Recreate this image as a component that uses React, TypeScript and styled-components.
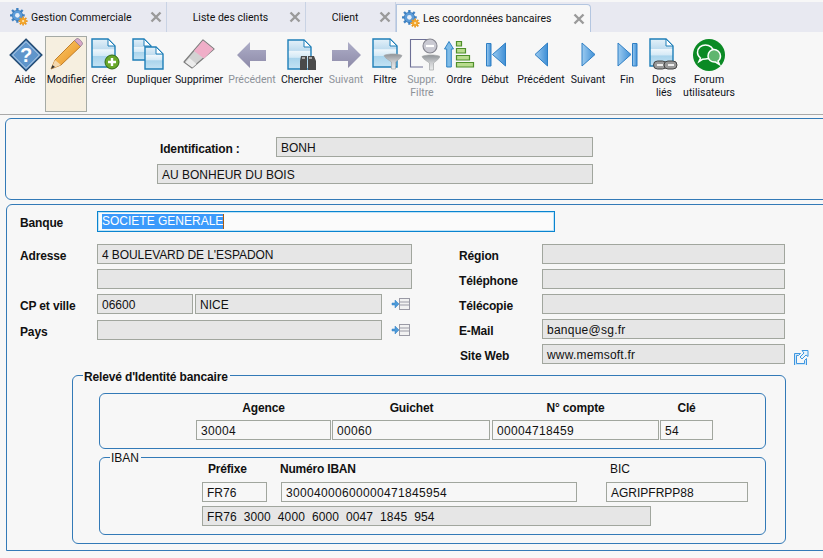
import React from "react";
import styled, { createGlobalStyle } from "styled-components";

const Global = createGlobalStyle`
  html, body { margin: 0; padding: 0; background: #f7f7f7; }
  body { font-family: "Liberation Sans", Arial, sans-serif; }
`;

const Screen = styled.div`
  width: 823px;
  height: 558px;
  overflow: hidden;
  display: flex;
  flex-direction: column;
  background: #f7f7f7;
  color: #111;
`;

const TabBar = styled.div`
  height: 30px;
  margin-top: 2px;
  background: #e8e9f1;
  display: flex;
  flex: none;
`;

const Tab = styled.div<{ $w: number; $active?: boolean; $center?: boolean }>`
  width: ${(p) => p.$w}px;
  box-sizing: border-box;
  flex: none;
  display: flex;
  align-items: center;
  padding-left: ${(p) => (p.$center ? 8 : p.$active ? 5 : 10)}px;
  padding-right: ${(p) => (p.$active ? 5 : 4)}px;
  margin-top: ${(p) => (p.$active ? 2 : 0)}px;
  font: 10.5px Roboto, sans-serif;
  color: #111;
  gap: 3px;
  background: ${(p) => (p.$active ? "#f7f7f7" : "transparent")};
  border-right: 1px solid ${(p) => (p.$active ? "#b4c6e0" : "#c9d3e4")};
  border-top: ${(p) => (p.$active ? "1px solid #b4c6e0" : "0")};
  border-left: ${(p) => (p.$active ? "1px solid #b4c6e0" : "0")};
  border-top-right-radius: ${(p) => (p.$active ? 4 : 0)}px;
`;

const TabText = styled.span<{ $center?: boolean }>`
  flex: 1;
  white-space: nowrap;
  text-align: ${(p) => (p.$center ? "center" : "left")};
`;

const Toolbar = styled.div`
  height: 83px;
  flex: none;
  box-sizing: border-box;
  padding: 4px 0 0 5px;
  display: flex;
  border-bottom: 1px solid #a9a9a9;
  background: #f7f7f7;
`;

const ToolButton = styled.div<{ $w: number; $selected?: boolean }>`
  width: ${(p) => p.$w}px;
  height: 76px;
  box-sizing: border-box;
  flex: none;
  display: flex;
  flex-direction: column;
  align-items: center;
  background: ${(p) => (p.$selected ? "#f6efe0" : "transparent")};
  border: ${(p) => (p.$selected ? "1px solid #a5aaa5" : "1px solid transparent")};
`;

const ToolIcon = styled.svg`
  flex: none;
  width: 36px;
  height: 36px;
`;

const ToolLabel = styled.span<{ $off?: boolean }>`
  font: 10.5px/13px Roboto, sans-serif;
  white-space: pre;
  text-align: center;
  color: ${(p) => (p.$off ? "#8d9299" : "#10131c")};
`;

const Panel = styled.div`
  margin-left: 5px;
  margin-top: 3px;
  width: 830px;
  height: 82px;
  flex: none;
  box-sizing: border-box;
  border: 1px solid #337ab7;
  border-radius: 6px;
  padding: 18px 0 0 151px;
  display: flex;
  flex-direction: column;
  gap: 7px;
`;

const Row = styled.div<{ $h?: number }>`
  display: flex;
  align-items: center;
  height: ${(p) => p.$h ?? 20}px;
`;

const Label = styled.span<{ $w: number; $shift?: number }>`
  width: ${(p) => p.$w}px;
  padding: 3px 0 0 ${(p) => p.$shift ?? 0}px;
  box-sizing: border-box;
  flex: none;
  font: bold 12px/14px "Liberation Sans", Arial, sans-serif;
  letter-spacing: -0.15px;
  color: #111;
`;

const Field = styled.div<{ $w: number; $tone?: "gray" | "plain"; $track?: number }>`
  width: ${(p) => p.$w}px;
  height: 20px;
  flex: none;
  box-sizing: border-box;
  border: 1px solid #a1a69e;
  padding-left: 4px;
  background: ${(p) => (p.$tone === "plain" ? "#f7f7f7" : "#e6e6e6")};
  font: 12px/20px "Liberation Sans", Arial, sans-serif;
  letter-spacing: ${(p) => p.$track ?? 0}px;
  color: #111;
  white-space: pre;
  overflow: hidden;
`;

const ActiveField = styled.div`
  width: 458px;
  height: 21px;
  box-sizing: border-box;
  flex: none;
  border: 1px solid #0a84d0;
  box-shadow: inset 0 0 0 1px #bfe3f7;
  padding: 2px 0 0 4px;
  background: #fbfbfb;
  font: 12px/15px "Liberation Sans", Arial, sans-serif;
`;

const Selected = styled.span`
  display: inline-block;
  background: #3b9afb;
  color: #fff;
  border-right: 1px solid #a45a10;
`;

const MainPanel = styled.div`
  margin: 4px 0 0 6px;
  width: 830px;
  height: 347px;
  flex: none;
  box-sizing: border-box;
  border: 1px solid #337ab7;
  border-top-left-radius: 6px;
  padding: 6px 0 0 13px;
`;

const Columns = styled.div`
  display: flex;
  margin-top: 12px;
`;

const LeftColumn = styled.div`
  width: 439px;
  flex: none;
  display: flex;
  flex-direction: column;
`;

const RightColumn = styled.div`
  display: flex;
  flex-direction: column;
  gap: 5px;
`;

const LeftRow = styled(Row)<{ $gap: number }>`
  margin-bottom: ${(p) => p.$gap}px;
  gap: 2px;
`;

const LinkIcon = styled.svg`
  flex: none;
  margin-left: 7px;
  width: 20px;
  height: 14px;
`;

const OpenIcon = styled.svg`
  flex: none;
  margin-left: 8px;
  margin-top: 5px;
  width: 16px;
  height: 16px;
`;

const GroupBox = styled.div`
  position: relative;
  margin: 11px 0 0 52px;
  width: 714px;
  height: 169px;
  box-sizing: border-box;
  border: 1px solid #337ab7;
  border-radius: 6px;
  padding: 17px 0 0 26px;
  display: flex;
  flex-direction: column;
  gap: 8px;
`;

const Legend = styled.span<{ $bold?: boolean; $left: number }>`
  position: absolute;
  top: ${(p) => (p.$bold ? -6 : -7)}px;
  left: ${(p) => p.$left}px;
  padding: 0 2px 0 1px;
  background: #f7f7f7;
  font: ${(p) => (p.$bold ? "bold" : "normal")} 12px/14px "Liberation Sans", Arial, sans-serif;
  letter-spacing: ${(p) => (p.$bold ? -0.15 : 0)}px;
  color: #111;
`;

const SubBox = styled.div<{ $h: number }>`
  position: relative;
  width: 667px;
  height: ${(p) => p.$h}px;
  flex: none;
  box-sizing: border-box;
  border: 1px solid #337ab7;
  border-radius: 6px;
`;

const RibGrid = styled.div`
  display: flex;
  gap: 1px;
  padding: 7px 0 0 96px;
`;

const RibColumn = styled.div<{ $w: number }>`
  width: ${(p) => p.$w}px;
  display: flex;
  flex-direction: column;
  gap: 5px;
`;

const Heading = styled.span`
  font: bold 12px/14px "Liberation Sans", Arial, sans-serif;
  letter-spacing: -0.15px;
  text-align: center;
`;

const IbanBody = styled.div`
  padding: 4px 0 0 102px;
  display: flex;
  flex-direction: column;
  gap: 4px;
`;

const IbanCells = styled.div`
  display: grid;
  grid-template-columns: 79px 325px 142px;
  row-gap: 6px;
`;

const IbanHeading = styled.span<{ $shift: number; $bold?: boolean }>`
  margin-left: ${(p) => p.$shift}px;
  font: ${(p) => (p.$bold ? "bold" : "normal")} 12px/14px "Liberation Sans", Arial, sans-serif;
  letter-spacing: ${(p) => (p.$bold ? -0.2 : 0)}px;
`;

const Gear = () => (
  <svg width="18" height="18" viewBox="0 0 22 22" style={{ flex: "none" }}>
    <g stroke="#3f82c4" strokeWidth="2.8">
      <path d="M9 0v18M0 9h18M2.500 2.500l13 13M15.500 2.500l-13 13" />
    </g>
    <circle cx="9" cy="9" r="6.400" fill="#5b9bd8" stroke="#2e6fae" strokeWidth=".8" />
    <circle cx="9" cy="9" r="2.800" fill="#e6eef8" />
    <g stroke="#e7941f" strokeWidth="2">
      <path d="M16 10.500v11M10.500 16h11M12 12l8 8M20 12l-8 8" />
    </g>
    <circle cx="16" cy="16" r="3.800" fill="#f2a52c" />
    <circle cx="16" cy="16" r="1.400" fill="#fde7b5" />
  </svg>
);

const Close = () => (
  <svg width="12" height="12" viewBox="0 0 12 12" style={{ flex: "none" }}>
    <path d="M1.500 1.500l9 9M10.500 1.500l-9 9" stroke="#9a9a9a" strokeWidth="2.400" />
  </svg>
);

const Defs = () => (
  <svg width="0" height="0" style={{ position: "absolute" }}>
    <defs>
      <linearGradient id="page" x1="0" y1="0" x2="0" y2="1">
        <stop offset="0" stopColor="#e4f1f9" />
        <stop offset=".36" stopColor="#bfdcef" />
        <stop offset=".38" stopColor="#eef6fb" />
        <stop offset=".6" stopColor="#d3e9f6" />
        <stop offset=".62" stopColor="#a9d4ec" />
        <stop offset="1" stopColor="#c4e3f4" />
      </linearGradient>
      <linearGradient id="blueBtn" x1="0" y1="0" x2="1" y2="0">
        <stop offset="0" stopColor="#9ccbf0" />
        <stop offset="1" stopColor="#3f8fd6" />
      </linearGradient>
      <linearGradient id="greyArrow" x1="0" y1="0" x2="0" y2="1">
        <stop offset="0" stopColor="#aeaec8" />
        <stop offset="1" stopColor="#8d8aa8" />
      </linearGradient>
      <linearGradient id="pencil" x1="0" y1="0" x2="1" y2="1">
        <stop offset="0" stopColor="#fbd27a" />
        <stop offset="1" stopColor="#e98a14" />
      </linearGradient>
      <linearGradient id="funnel" x1="0" y1="0" x2="0" y2="1">
        <stop offset="0" stopColor="#8f9397" />
        <stop offset=".5" stopColor="#c9cbce" />
        <stop offset="1" stopColor="#eceded" />
      </linearGradient>
    </defs>
  </svg>
);

const Page = ({ x, y, w = 22, h = 28 }: { x: number; y: number; w?: number; h?: number }) => (
  <g>
    <path
      d={`M${x} ${y}h${w - 7}l7 7v${h - 7}h-${w}z`}
      fill="url(#page)"
      stroke="#1f7fb8"
      strokeWidth="1.400"
    />
    <path d={`M${x + w - 7} ${y}v7h7z`} fill="#fff" stroke="#1f7fb8" strokeWidth="1" />
  </g>
);

const Funnel = ({ x, y }: { x: number; y: number }) => (
  <path
    transform={`translate(${x} ${y})`}
    d="M0 1.500C4-.5 14-.5 18 1.500c-1 3-5 5-6.500 6.500v7h-4V8C6 6.500 1 4.500 0 1.500z"
    fill="url(#funnel)"
    stroke="#a4a6a8"
    strokeWidth=".7"
  />
);

const icons: Record<string, React.ReactNode> = {
  aide: (
    <>
      <path d="M19 2L35 18 19 34 3 18z" fill="#3e78b5" stroke="#24496f" strokeWidth="1.200" />
      <path d="M19 4.500L32.500 18 19 31.500 5.500 18z" fill="#5f95cb" stroke="#cfe0f0" strokeWidth="1" />
      <text x="19" y="25" textAnchor="middle" fontFamily="Liberation Sans" fontWeight="bold" fontSize="20" fill="#fff">?</text>
    </>
  ),
  modifier: (
    <>
      <path d="M3 32l4-9L27 3l6 6-20 19z" fill="url(#pencil)" stroke="#b26a10" strokeWidth=".8" />
      <path d="M26.500 3.500l6 6 2-2.500c.5-1.500-3.500-6-5.500-5.500z" fill="#d9a8c8" stroke="#8a7a90" strokeWidth=".8" />
      <path d="M7 23l6 5-10 4z" fill="#f4d8ae" />
      <path d="M3 32l1.500-4 2.500 2z" fill="#333" />
    </>
  ),
  creer: (
    <>
      <Page x={6} y={2} w={23} h={28} />
      <circle cx="26" cy="25" r="7" fill="#6aa82a" stroke="#2f6a12" strokeWidth="1" />
      <path d="M26 21v8M22 25h8" stroke="#fff" strokeWidth="2.400" />
    </>
  ),
  dupliquer: (
    <>
      <Page x={2} y={2} w={18} h={21} />
      <Page x={14} y={10} w={18} h={22} />
    </>
  ),
  supprimer: (
    <>
      <path d="M3 25L22 3l11 9L11 31z" fill="#d2d2d2" stroke="#7d7d7d" strokeWidth="1.200" strokeLinejoin="round" />
      <path d="M13 14L22 3.500 32.500 12 23 21.500z" fill="#f0aec8" />
      <path d="M4.500 25.500l4-4.500 7 6-4 3.500z" fill="#ececec" />
    </>
  ),
  arrowL: <path d="M3 18L16 5v8h16v11H16v7z" fill="url(#greyArrow)" />,
  chercher: (
    <>
      <Page x={4} y={3} w={23} h={29} />
      <path d="M17 19h6v14h-7v-9zM24 19h6l2 5v9h-8z" fill="#4a4a4a" />
      <path d="M18 21h3M25 21h3" stroke="#aaa" strokeWidth="2" />
    </>
  ),
  arrowR: <path d="M33 18L20 5v8H4v11h16v7z" fill="url(#greyArrow)" />,
  filtre: (
    <>
      <Page x={6} y={2} w={24} h={28} />
      <Funnel x={17} y={17} />
    </>
  ),
  supprFiltre: (
    <>
      <path d="M23 2.500H6.500v27.500H19" fill="#f8f8f8" stroke="#6d6f95" strokeWidth="1.100" />
      <circle cx="26" cy="9" r="7" fill="#c9c9d2" stroke="#85858f" strokeWidth="1.100" />
      <path d="M22 9h8" stroke="#fff" strokeWidth="2.200" />
      <Funnel x={18} y={18} />
    </>
  ),
  ordre: (
    <>
      <path d="M3.500 12L8 4.500l4.500 7.500h-2.200v18H5.700V12z" fill="#7fbce8" stroke="#2f83c4" strokeWidth="1" />
      <path d="M15.500 4.500h5v4.500h-5zM15.500 11.500h9V16h-9zM15.500 18.500h13V23h-13zM15.500 25.500h17V30h-17z" fill="#b9dc8e" stroke="#4f8f2a" strokeWidth="1.200" />
    </>
  ),
  debut: (
    <>
      <path d="M9.500 6.500h4.500v22.500H9.500z" fill="url(#blueBtn)" stroke="#2f7fc4" />
      <path d="M28.500 6v23L15.500 17.500z" fill="url(#blueBtn)" stroke="#2f7fc4" />
    </>
  ),
  prec: <path d="M24.500 6v23L12 17.500z" fill="url(#blueBtn)" stroke="#2f7fc4" />,
  suiv: <path d="M12 6v23l13-11.500z" fill="url(#blueBtn)" stroke="#2f7fc4" />,
  fin: (
    <>
      <path d="M9 6v23l13-11.500z" fill="url(#blueBtn)" stroke="#2f7fc4" />
      <path d="M23.500 6.500h4.500v22.500h-4.500z" fill="url(#blueBtn)" stroke="#2f7fc4" />
    </>
  ),
  docs: (
    <>
      <Page x={4} y={2} w={23} h={27} />
      <rect x="7.500" y="24" width="13" height="8" rx="4" fill="#999" stroke="#444" strokeWidth="1" />
      <rect x="18" y="24" width="13" height="8" rx="4" fill="#999" stroke="#444" strokeWidth="1" />
      <rect x="11" y="27" width="6" height="2" fill="#eee" />
      <rect x="22" y="27" width="6" height="2" fill="#eee" />
    </>
  ),
  forum: (
    <>
      <circle cx="18" cy="18" r="16" fill="#0b8a25" />
      <path d="M6.500 15.500C6.500 10.500 10.500 8 14.500 8s8 2.500 8 7-4 7-8 7c-1 0-2 0-3 .3L8 24.500l1.500-3.500C7.500 19.500 6.500 17.500 6.500 15.500z" fill="#0b8a25" stroke="#fff" strokeWidth="1.500" />
      <path d="M17 19c0-4 3-6.500 6-6.500s6.500 2.500 6.500 6.500c0 2-1 4-2.500 5l1.500 3.500-4-2.500c-4.500.5-7.500-2.500-7.500-6z" fill="#5fb66f" stroke="#fff" strokeWidth="1.500" />
    </>
  ),
};

const tools = [
  { w: 40, label: "Aide", icon: "aide" },
  { w: 42, label: "Modifier", icon: "modifier", selected: true },
  { w: 34, label: "Créer", icon: "creer" },
  { w: 56, label: "Dupliquer", icon: "dupliquer" },
  { w: 44, label: "Supprimer", icon: "supprimer" },
  { w: 62, label: "Précédent", icon: "arrowL", off: true },
  { w: 38, label: "Chercher", icon: "chercher" },
  { w: 50, label: "Suivant", icon: "arrowR", off: true },
  { w: 28, label: "Filtre", icon: "filtre" },
  { w: 46, label: "Suppr.\nFiltre", icon: "supprFiltre", off: true },
  { w: 28, label: "Ordre", icon: "ordre" },
  { w: 44, label: "Début", icon: "debut" },
  { w: 48, label: "Précédent", icon: "prec" },
  { w: 46, label: "Suivant", icon: "suiv" },
  { w: 32, label: "Fin", icon: "fin" },
  { w: 42, label: "Docs\nliés", icon: "docs" },
  { w: 48, label: "Forum\nutilisateurs", icon: "forum" },
];

const ListLink = () => (
  <LinkIcon viewBox="0 0 20 14">
    <path d="M1 6h3V3l4 4-4 4V8H1z" fill="#4d9ad8" stroke="#2f7fc4" strokeWidth=".5" />
    <rect x="8.500" y="1.500" width="10" height="11" fill="#f2f2f2" stroke="#9a9aa5" />
    <path d="M9 5h9M9 8h9" stroke="#9a9aa5" />
  </LinkIcon>
);

const ExternalLink = () => (
  <OpenIcon viewBox="0 0 16 16">
    <path d="M1.500 4.500h6l-2 2h-2v8h8v-3l2-2v7h-12z" fill="#cfe6f8" stroke="#3f97e0" />
    <path d="M9 1.500h6v6l-2-1.500-4 4-2-2 4-4z" fill="#e8f4fc" stroke="#3f97e0" />
  </OpenIcon>
);

export default function App() {
  return (
    <Screen>
      <Global />
      <Defs />
      <TabBar>
        <Tab $w={167}>
          <Gear />
          <TabText>Gestion Commerciale</TabText>
          <Close />
        </Tab>
        <Tab $w={139} $center>
          <TabText $center>Liste des clients</TabText>
          <Close />
        </Tab>
        <Tab $w={90} $center>
          <TabText $center>Client</TabText>
          <Close />
        </Tab>
        <Tab $w={195} $active>
          <Gear />
          <TabText>Les coordonnées bancaires</TabText>
          <Close />
        </Tab>
      </TabBar>

      <Toolbar>
        {tools.map((t) => (
          <ToolButton key={t.label + t.icon} $w={t.w} $selected={t.selected}>
            <ToolIcon viewBox="0 0 36 36">{icons[t.icon]}</ToolIcon>
            <ToolLabel $off={t.off}>{t.label}</ToolLabel>
          </ToolButton>
        ))}
      </Toolbar>

      <Panel>
        <Row>
          <Label $w={119} $shift={3}>Identification :</Label>
          <Field $w={317}>BONH</Field>
        </Row>
        <Row>
          <Field $w={436}>AU BONHEUR DU BOIS</Field>
        </Row>
      </Panel>

      <MainPanel>
        <Row $h={21}>
          <Label $w={77}>Banque</Label>
          <ActiveField>
            <Selected>SOCIETE GENERALE</Selected>
          </ActiveField>
        </Row>
        <Columns>
          <LeftColumn>
            <LeftRow $gap={5}>
              <Label $w={75}>Adresse</Label>
              <Field $w={315} $track={-0.08}>4 BOULEVARD DE L'ESPADON</Field>
            </LeftRow>
            <LeftRow $gap={5}>
              <Label $w={75} />
              <Field $w={315} />
            </LeftRow>
            <LeftRow $gap={6}>
              <Label $w={75}>CP et ville</Label>
              <Field $w={96}>06600</Field>
              <Field $w={187}>NICE</Field>
              <ListLink />
            </LeftRow>
            <LeftRow $gap={0}>
              <Label $w={75}>Pays</Label>
              <Field $w={285} />
              <ListLink />
            </LeftRow>
          </LeftColumn>
          <RightColumn>
            <Row>
              <Label $w={83}>Région</Label>
              <Field $w={243} />
            </Row>
            <Row>
              <Label $w={83}>Téléphone</Label>
              <Field $w={243} />
            </Row>
            <Row>
              <Label $w={83}>Télécopie</Label>
              <Field $w={243} />
            </Row>
            <Row>
              <Label $w={83}>E-Mail</Label>
              <Field $w={243} $track={0.25}>banque@sg.fr</Field>
            </Row>
            <Row>
              <Label $w={83} $shift={1}>Site Web</Label>
              <Field $w={243} $track={0.2}>www.memsoft.fr</Field>
              <ExternalLink />
            </Row>
          </RightColumn>
        </Columns>

        <GroupBox>
          <Legend $bold $left={10}>Relevé d'Identité bancaire</Legend>
          <SubBox $h={56}>
            <RibGrid>
              <RibColumn $w={135}>
                <Heading>Agence</Heading>
                <Field $w={135} $tone="plain" $track={0.33}>30004</Field>
              </RibColumn>
              <RibColumn $w={159}>
                <Heading>Guichet</Heading>
                <Field $w={158} $tone="plain" $track={0.33}>00060</Field>
              </RibColumn>
              <RibColumn $w={167}>
                <Heading>N° compte</Heading>
                <Field $w={167} $tone="plain" $track={0.33}>00004718459</Field>
              </RibColumn>
              <RibColumn $w={53}>
                <Heading>Clé</Heading>
                <Field $w={53} $tone="plain" $track={0.33}>54</Field>
              </RibColumn>
            </RibGrid>
          </SubBox>
          <SubBox $h={78}>
            <Legend $left={10}>IBAN</Legend>
            <IbanBody>
              <IbanCells>
                <IbanHeading $bold $shift={6}>Préfixe</IbanHeading>
                <IbanHeading $bold $shift={-1}>Numéro IBAN</IbanHeading>
                <IbanHeading $shift={4}>BIC</IbanHeading>
                <Field $w={65} $tone="plain">FR76</Field>
                <Field $w={296} $tone="plain" $track={0.33}>30004000600000471845954</Field>
                <Field $w={142} $tone="plain">AGRIPFRPP88</Field>
              </IbanCells>
              <Field $w={449} $track={0.12}>FR76  3000  4000  6000  0047  1845  954</Field>
            </IbanBody>
          </SubBox>
        </GroupBox>
      </MainPanel>
    </Screen>
  );
}
